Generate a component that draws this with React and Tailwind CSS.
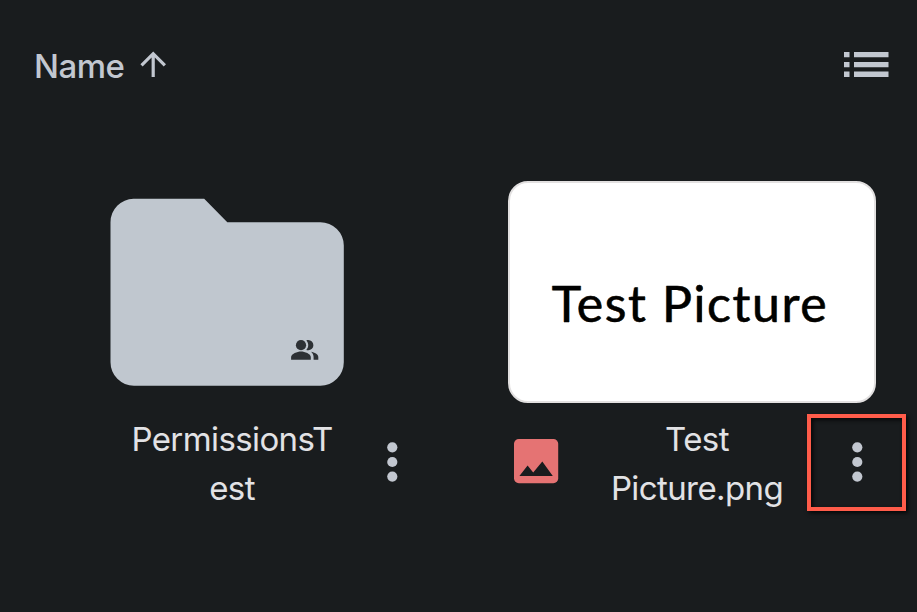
const DotsIcon = () => (
  <svg className="block h-10 w-3" viewBox="0 0 12 40" fill="#c2c7d0">
    <circle cx="6.3" cy="5.3" r="5.1" />
    <circle cx="6.3" cy="20" r="5.1" />
    <circle cx="6.3" cy="34.6" r="5.1" />
  </svg>
);

const ListIcon = () => (
  <svg className="block h-[27px] w-[46px]" viewBox="0 0 46 27" fill="#c2c7d0">
    <path d="M1 1h5.5v5.3H1zM11 1h34.5v5.3H11zM1 11h5.5v5.3H1zM11 11h34.5v5.3H11zM1 20.5h5.5v5.5H1zM11 20.5h34.5v5.5H11z" />
  </svg>
);

const FolderIcon = () => (
  <svg className="block h-[188px] w-[236px]" viewBox="0 0 236 188">
    <path
      fill="#c0c7cf"
      d="M24.5.8H95.2L118.3 24.2H211.2A23.4 23.4 0 0 1 234.8 47.6V164.3A23.4 23.4 0 0 1 211.4 187.7H24.9A23.4 23.4 0 0 1 1.5 164.3V24.2A23.4 23.4 0 0 1 24.5.8Z"
    />
    {/* shared folder badge */}
    <g fill="#2d3135">
      <circle cx="192" cy="147.2" r="5.1" />
      <path d="M182.1 161.8V159C182.1 155.7 188.3 153.4 192 153.4S201.8 155.7 201.8 159V161.8Z" />
      <path d="M197.3 142.5C198 142.2 198.6 142.1 199.3 142.1A5.1 5.1 0 0 1 199.3 152.3C198.6 152.3 198 152.2 197.3 151.9C199.9 149.1 199.9 145.3 197.3 142.5Z" />
      <path d="M202 153.8C205.5 154.4 209.3 156.3 209.3 159V161.8H204.6V159C204.6 156.8 203.5 155.1 202 153.8Z" />
    </g>
  </svg>
);

const ImageIcon = () => (
  <svg className="block size-[46px]" viewBox="0 0 46 46">
    <rect x="1" y="1" width="44.2" height="44.2" rx="4.8" fill="#e57373" />
    <path d="M6.4 37.9L14.6 27.4L20.2 34.5L29.3 23.6L39.8 37.9Z" fill="#191c1e" />
  </svg>
);

const FileName = ({ lines }) => (
  <p className="w-60 whitespace-nowrap pt-1.5 text-center text-[33px] leading-[48.5px] tracking-[-0.6px] text-[#e2e2e5]">
    {lines[0]}
    <br />
    {lines[1]}
  </p>
);

const App = () => {
  return (
    <div className="h-[612px] w-[917px] overflow-hidden bg-[#191c1e] font-[Inter,sans-serif]">

      {/* Sort bar */}
      <header className="flex h-[132px] items-center justify-between pl-[34px] pr-7">
        <button className="flex items-center gap-[9px] text-[#c2c7d0]">
          <span className="w-[91px] whitespace-nowrap text-left text-[33px] font-medium leading-10 tracking-[-0.5px]">Name</span>
          <svg className="-mt-1 size-[38.4px]" viewBox="0 0 24 24" fill="currentColor">
            <path d="M4 12l1.41 1.41L11 7.83V20h2V7.83l5.58 5.59L20 12l-8-8-8 8z" />
          </svg>
        </button>
        <button className="-mt-[3px]">
          <ListIcon />
        </button>
      </header>

      {/* Files */}
      <main className="flex gap-[97px] pl-[43px] pt-12">
        <section className="w-[368px] shrink-0">
          <div className="flex h-[224px] justify-center pt-[18px]">
            <FolderIcon />
          </div>
          <div className="flex pl-[69px] pt-[5px]">
            <FileName lines={["PermissionsT", "est"]} />
            <button className="ml-[34px] mt-[33px] h-10">
              <DotsIcon />
            </button>
          </div>
        </section>

        <section className="w-[368px] shrink-0 pt-px">
          <div className="flex h-[222px] items-center justify-center rounded-[20px] border-2 border-[#e2e0e0] bg-white pt-[21px]">
            <span className="whitespace-nowrap pr-1 font-[Lato,sans-serif] text-[50px] leading-none tracking-[1.6px] text-black [-webkit-text-stroke:0.3px_#000] [text-shadow:-0.7px_0_#f0a050,0.7px_0_#50a8f0]">Test Picture</span>
          </div>
          <div className="flex pl-[5px] pt-[6px]">
            <div className="mt-[29px]">
              <ImageIcon />
            </div>
            <div className="ml-[18px]">
              <FileName lines={["Test", "Picture.png"]} />
            </div>
            <button className="-ml-[10px] mt-[5px] flex h-[97px] w-[99px] shrink-0 items-center justify-center border-4 border-[#ff5c4a] pb-[2px] shadow-[2px_2px_4px_rgba(0,0,0,0.8),inset_2px_2px_4px_rgba(0,0,0,0.8)]">
              <DotsIcon />
            </button>
          </div>
        </section>
      </main>

    </div>
  );
};

export default App;
